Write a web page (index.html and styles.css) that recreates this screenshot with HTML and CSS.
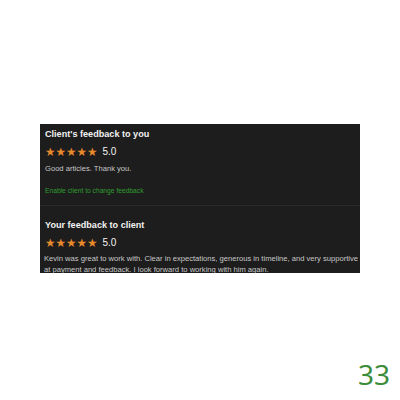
FILE: index.html
```html
<!DOCTYPE html>
<html lang="en">
<head>
<meta charset="UTF-8">
<title>Feedback</title>
<link rel="stylesheet" href="styles.css">
</head>
<body>
    <div class="page">
        <div class="feedback-card">
            <div class="feedback-block">
                <p class="feedback-title">Client's feedback to you</p>
                <div class="rating">
                    <span class="stars">★★★★★</span>
                    <span class="score">5.0</span>
                </div>
                <p class="feedback-text">Good articles. Thank you.</p>
                <p class="feedback-link">Enable client to change feedback</p>
            </div>
            <div class="feedback-block second">
                <p class="feedback-title">Your feedback to client</p>
                <div class="rating">
                    <span class="stars">★★★★★</span>
                    <span class="score">5.0</span>
                </div>
                <p class="feedback-text">Kevin was great to work with. Clear in expectations, generous in timeline, and very supportive at payment and feedback. I look forward to working with him again.</p>
            </div>
        </div>
        <div class="page-number">33</div>
    </div>
</body>
</html>
```
FILE: styles.css
```css
body {
    margin: 0;
    background-color: #ffffff;
    font-family: 'Liberation Sans', Arial, sans-serif;
}

.page {
    width: 400px;
    height: 400px;
    display: flex;
    flex-direction: column;
    padding-top: 124px;
    box-sizing: border-box;
}

.feedback-card {
    margin-left: 40px;
    width: 320px;
    height: 149px;
    background-color: #1d1d1d;
    box-sizing: border-box;
    overflow: hidden;
}

.feedback-block {
    padding: 4px 0 0 5px;
    height: 82px;
    box-sizing: border-box;
    border-bottom: 1px solid #2a2a2a;
}

.feedback-block.second {
    border-bottom: none;
    padding-top: 13px;
    height: 67px;
}

.feedback-title {
    margin: 0;
    color: #f2f2f2;
    font-size: 9.1px;
    font-weight: 600;
    line-height: 13px;
}

.rating {
    display: flex;
    align-items: center;
    gap: 5px;
    margin-top: 5px;
    height: 12px;
}

.stars {
    color: #e8892c;
    font-family: 'DejaVu Sans', sans-serif;
    font-size: 11.7px;
    line-height: 12px;
}

.score {
    color: #f2f2f2;
    font-size: 10px;
    line-height: 12px;
}

.feedback-text {
    margin: 5px 0 0 0;
    color: #c8c8c8;
    font-size: 7.6px;
    line-height: 11px;
}

/* the long review runs right up to the card edge */
.second .feedback-text {
    margin: 4px -6px 0 -1px;
}

.feedback-link {
    margin: 12px 0 0 0;
    color: #2f9e2f;
    font-size: 6.7px;
    line-height: 9px;
}

.page-number {
    align-self: flex-end;
    margin-top: 86px;
    margin-right: 10px;
    color: #3b8d3b;
    font-family: 'Noto Sans', sans-serif;
    font-size: 28px;
    line-height: 30px;
}
```
